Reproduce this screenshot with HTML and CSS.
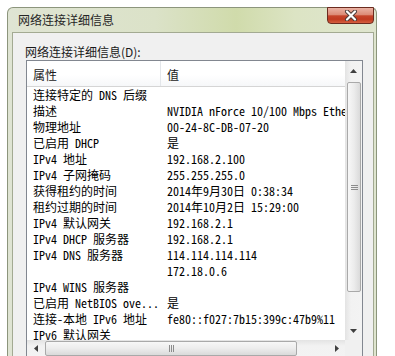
FILE: index.html
```html
<!DOCTYPE html>
<html lang="zh-CN">

<head>
    <meta charset="UTF-8">
    <title>网络连接详细信息</title>
    <link rel="stylesheet" href="styles.css">
</head>

<body>
    <div class="window">
        <div class="titlebar">
            <span class="title">网络连接详细信息</span>
            <div class="close">
                <svg width="14" height="11" viewBox="0 0 14 11">
                    <path d="M3 1.5 L11 9.5 M11 1.5 L3 9.5" stroke="#4a3a36" stroke-width="4" stroke-linecap="round" />
                    <path d="M3 1.5 L11 9.5 M11 1.5 L3 9.5" stroke="#ffffff" stroke-width="2.2" stroke-linecap="round" />
                </svg>
            </div>
        </div>

        <div class="client">
            <div class="label">网络连接详细信息(D):</div>

            <div class="listview">
                <div class="lv-body">
                    <div class="lv-head">
                        <div class="hcol hcol-key">属性</div>
                        <div class="hcol">值</div>
                    </div>
                    <div class="lv-rows">
                        <div class="row"><span class="k">连接特定的 DNS 后缀</span><span class="v"></span></div>
                        <div class="row"><span class="k">描述</span><span class="v">NVIDIA nForce 10/100 Mbps Ethernet</span></div>
                        <div class="row"><span class="k">物理地址</span><span class="v">00-24-8C-DB-07-20</span></div>
                        <div class="row"><span class="k">已启用 DHCP</span><span class="v">是</span></div>
                        <div class="row"><span class="k">IPv4 地址</span><span class="v">192.168.2.100</span></div>
                        <div class="row"><span class="k">IPv4 子网掩码</span><span class="v">255.255.255.0</span></div>
                        <div class="row"><span class="k">获得租约的时间</span><span class="v">2014年9月30日 0:38:34</span></div>
                        <div class="row"><span class="k">租约过期的时间</span><span class="v">2014年10月2日 15:29:00</span></div>
                        <div class="row"><span class="k">IPv4 默认网关</span><span class="v">192.168.2.1</span></div>
                        <div class="row"><span class="k">IPv4 DHCP 服务器</span><span class="v">192.168.2.1</span></div>
                        <div class="row"><span class="k">IPv4 DNS 服务器</span><span class="v">114.114.114.114</span></div>
                        <div class="row"><span class="k"></span><span class="v">172.18.0.6</span></div>
                        <div class="row"><span class="k">IPv4 WINS 服务器</span><span class="v"></span></div>
                        <div class="row"><span class="k">已启用 NetBIOS ove...</span><span class="v">是</span></div>
                        <div class="row"><span class="k">连接-本地 IPv6 地址</span><span class="v">fe80::f027:7b15:399c:47b9%11</span></div>
                        <div class="row"><span class="k">IPv6 默认网关</span><span class="v"></span></div>
                    </div>
                </div>

                <div class="vscroll">
                    <div class="sb-btn sb-up">
                        <svg width="7" height="4" viewBox="0 0 7 4"><polygon points="3.5,0 7,4 0,4" fill="#404040" /></svg>
                    </div>
                    <div class="vthumb">
                        <svg width="7" height="5" viewBox="0 0 7 5">
                            <path d="M0 0.5 H7 M0 2.5 H7 M0 4.5 H7" stroke="#8c8c8c" stroke-width="1" />
                        </svg>
                    </div>
                    <div class="sb-fill"></div>
                    <div class="sb-btn sb-down">
                        <svg width="7" height="4" viewBox="0 0 7 4"><polygon points="0,0 7,0 3.5,4" fill="#404040" /></svg>
                    </div>
                </div>

                <div class="hscroll">
                    <div class="sb-btn sb-left">
                        <svg width="4" height="7" viewBox="0 0 4 7"><polygon points="0,3.5 4,0 4,7" fill="#404040" /></svg>
                    </div>
                    <div class="hthumb">
                        <svg width="5" height="7" viewBox="0 0 5 7">
                            <path d="M0.5 0 V7 M2.5 0 V7 M4.5 0 V7" stroke="#8c8c8c" stroke-width="1" />
                        </svg>
                    </div>
                    <div class="sb-fill"></div>
                    <div class="sb-btn sb-right">
                        <svg width="4" height="7" viewBox="0 0 4 7"><polygon points="0,0 4,3.5 0,7" fill="#404040" /></svg>
                    </div>
                </div>

                <div class="corner"></div>
            </div>
        </div>
    </div>
</body>

</html>
```

FILE: styles.css
```css
body {
    margin: 0;
    background-color: #ffffff;
    overflow: hidden;
    font-family: "Noto Sans CJK SC", sans-serif;
    font-size: 12px;
    color: #1a1a1a;
}

.window {
    width: 370px;
    height: 360px;
    box-sizing: border-box;
    margin: 7px 0 0 7px;
    padding: 0 2px 0 4px;
    border: 1px solid #8c957c;
    border-bottom: none;
    border-radius: 6px 6px 0 0;
    background: linear-gradient(to right, #dfe4d3 0%, #dbe2c8 40%, #d0dbab 62%, #dce4c4 78%, #dfe5cf 100%);
}

.titlebar {
    display: flex;
    justify-content: space-between;
    align-items: flex-start;
    height: 24px;
}

.title {
    padding: 4px 0 0 6px;
    line-height: 16px;
    color: #262626;
}

.close {
    width: 47px;
    height: 17px;
    margin-top: -1px;
    box-sizing: border-box;
    border: 1px solid #6b2b1f;
    border-radius: 0 0 4px 4px;
    background: linear-gradient(to bottom, #eab2a4 0%, #dc8b76 45%, #c6452b 52%, #c03a20 75%, #d55f40 100%);
    display: flex;
    align-items: center;
    justify-content: center;
}

.client {
    height: 330px;
    border: 1px solid #a3aa92;
    background-color: #f0f0f0;
    padding: 11px 0 0 12px;
}

.label {
    height: 16px;
    line-height: 16px;
}

.listview {
    width: 337px;
    height: 298px;
    box-sizing: border-box;
    margin-left: 1px;
    border: 1px solid #828790;
    background-color: #ffffff;
    display: grid;
    grid-template-columns: 318px 17px;
    grid-template-rows: 279px 17px;
}

.lv-body {
    overflow: hidden;
}

.lv-head {
    display: flex;
    height: 26px;
    box-sizing: border-box;
    border-bottom: 1px solid #d5d5d5;
    background: linear-gradient(to bottom, #ffffff 0%, #ffffff 55%, #f6f7f9 100%);
}

.hcol {
    padding: 3px 0 0 6px;
    line-height: 22px;
    color: #1a1a1a;
}

.hcol-key {
    width: 134px;
    box-sizing: border-box;
    border-right: 1px solid #e3e6ea;
}

.lv-rows {
    font-family: "Noto Sans Mono CJK SC", "Liberation Mono", "Noto Sans CJK SC", monospace;
    color: #000000;
}

.row {
    display: flex;
    height: 16px;
    line-height: 16px;
    white-space: nowrap;
}

.row .k {
    width: 134px;
    flex-shrink: 0;
    box-sizing: border-box;
    padding-left: 6px;
    overflow: hidden;
}

.row .v {
    padding-left: 6px;
}

.vscroll {
    display: flex;
    flex-direction: column;
    background: linear-gradient(to right, #e3e3e3 0%, #f2f2f2 35%, #f3f3f3 100%);
}

.hscroll {
    display: flex;
    background: linear-gradient(to bottom, #e3e3e3 0%, #f2f2f2 35%, #f3f3f3 100%);
}

.sb-btn {
    display: flex;
    align-items: center;
    justify-content: center;
}

.sb-up {
    height: 20px;
}

.sb-down {
    height: 19px;
}

.sb-left {
    width: 18px;
}

.sb-right {
    width: 17px;
}

.sb-fill {
    flex: 1;
}

.vthumb {
    height: 210px;
    margin: 1px 1px 0 2px;
    box-sizing: border-box;
    border: 1px solid #a9a9a9;
    border-radius: 2px;
    background: linear-gradient(to right, #f7f7f7 0%, #ececec 50%, #dadada 100%);
    display: flex;
    align-items: center;
    justify-content: center;
}

.hthumb {
    width: 252px;
    margin: 1px 0 1px 0;
    box-sizing: border-box;
    border: 1px solid #a9a9a9;
    border-radius: 2px;
    background: linear-gradient(to bottom, #f7f7f7 0%, #ececec 50%, #dadada 100%);
    display: flex;
    align-items: center;
    justify-content: center;
}

.corner {
    background-color: #f0f0f0;
}
```
